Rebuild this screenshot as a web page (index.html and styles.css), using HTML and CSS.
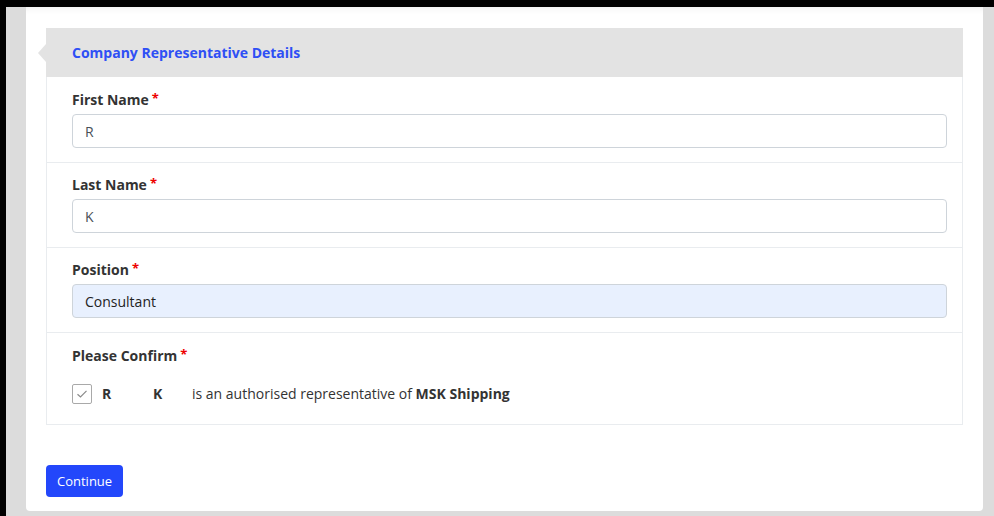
FILE: index.html
```html
<!DOCTYPE html>
<html>
<head>
<meta charset="utf-8">
<link rel="stylesheet" href="styles.css">
</head>
<body>
<div class="screen">
  <div class="card">
    <div class="panel">
      <div class="panel-head">
        <span class="panel-arrow"></span>
        <h2 class="panel-title">Company Representative Details</h2>
      </div>
      <div class="panel-body">
        <div class="field">
          <label class="label">First Name<span class="req">*</span></label>
          <input class="input" type="text" value="R">
        </div>
        <div class="field">
          <label class="label">Last Name<span class="req">*</span></label>
          <input class="input" type="text" value="K">
        </div>
        <div class="field">
          <label class="label">Position<span class="req">*</span></label>
          <input class="input input-filled" type="text" value="Consultant">
        </div>
        <div class="field field-confirm">
          <label class="label">Please Confirm<span class="req">*</span></label>
          <div class="confirm-row">
            <span class="checkbox">
              <svg width="12" height="10" viewBox="0 0 12 10"><path d="M1.5 5.2 L4.5 8 L10.5 1.8" fill="none" stroke="#8a8a8a" stroke-width="1.2"/></svg>
            </span>
            <span class="name first">R</span>
            <span class="name last">K</span>
            <span class="confirm-text">is an authorised representative of <b>MSK Shipping</b></span>
          </div>
        </div>
      </div>
    </div>
    <div class="actions">
      <button class="btn">Continue</button>
    </div>
  </div>
</div>
</body>
</html>
```

FILE: styles.css
```css
html, body {
  margin: 0;
  padding: 0;
  height: 100%;
}
body {
  background: #000;
  font-family: "Open Sans", "Noto Sans", sans-serif;
  color: #333;
  padding: 7px 0 0 6px;
  box-sizing: border-box;
  overflow: hidden;
}
.screen {
  background: #dcdcdc;
  height: 100%;
  padding: 0 11px 5px 20px;
  box-sizing: border-box;
}
.card {
  background: #fff;
  height: 504px;
  box-sizing: border-box;
  padding: 21px 20px 0 20px;
  border-radius: 0 0 4px 4px;
  box-shadow: inset 0 7px 7px -6px rgba(0,0,0,0.08);
}
.panel-head {
  position: relative;
  background: #e3e3e3;
  height: 49px;
  display: flex;
  align-items: center;
  padding-left: 26px;
}
.panel-arrow {
  position: absolute;
  left: -8px;
  top: 16px;
  width: 0;
  height: 0;
  border-top: 9px solid transparent;
  border-bottom: 9px solid transparent;
  border-right: 8px solid #e3e3e3;
}
.panel-title {
  margin: 0;
  font-size: 14px;
  font-weight: 700;
  color: #2e4ff5;
}
.panel-body {
  border: 1px solid #e9ecef;
  border-top: none;
}
.field {
  padding: 12px 15px 14px 25px;
  border-top: 1px solid #e9ecef;
  display: flex;
  flex-direction: column;
}
.field:first-child {
  border-top: none;
  padding-top: 13px;
}
.label {
  display: block;
  font-size: 14px;
  font-weight: 700;
  line-height: 20px;
  height: 20px;
  color: #333;
  margin-bottom: 4px;
}
.req {
  position: relative;
  top: -2px;
  color: #e00;
  margin-left: 3px;
  font-size: 13px;
  line-height: 0;
}
.input {
  height: 34px;
  box-sizing: border-box;
  border: 1px solid #ced4da;
  border-radius: 4px;
  padding: 0 12px;
  font-family: "Open Sans", "Noto Sans", sans-serif;
  font-size: 14px;
  color: #495057;
  background: #fff;
  outline: none;
}
.input-filled {
  background: #e8f0fe;
  color: #222;
}
.field-confirm {
  padding-top: 13px;
  padding-bottom: 20px;
}
.confirm-row {
  display: flex;
  align-items: center;
  margin-top: 14px;
  font-size: 14px;
  line-height: 20px;
  height: 20px;
}
.checkbox {
  width: 20px;
  height: 20px;
  box-sizing: border-box;
  border: 1px solid #a9a9a9;
  border-radius: 2px;
  display: flex;
  align-items: center;
  justify-content: center;
  margin-right: 10px;
}
.name {
  font-weight: 700;
  color: #333;
}
.name.first {
  width: 51px;
}
.name.last {
  width: 39px;
}
.confirm-text {
  color: #333;
}
.confirm-text b {
  font-weight: 700;
}
.actions {
  padding-top: 40px;
}
.btn {
  background: #2347fb;
  color: #fff;
  border: none;
  border-radius: 4px;
  height: 32px;
  padding: 0 11px;
  font-family: "Open Sans", "Noto Sans", sans-serif;
  font-size: 13px;
  cursor: pointer;
}
```
